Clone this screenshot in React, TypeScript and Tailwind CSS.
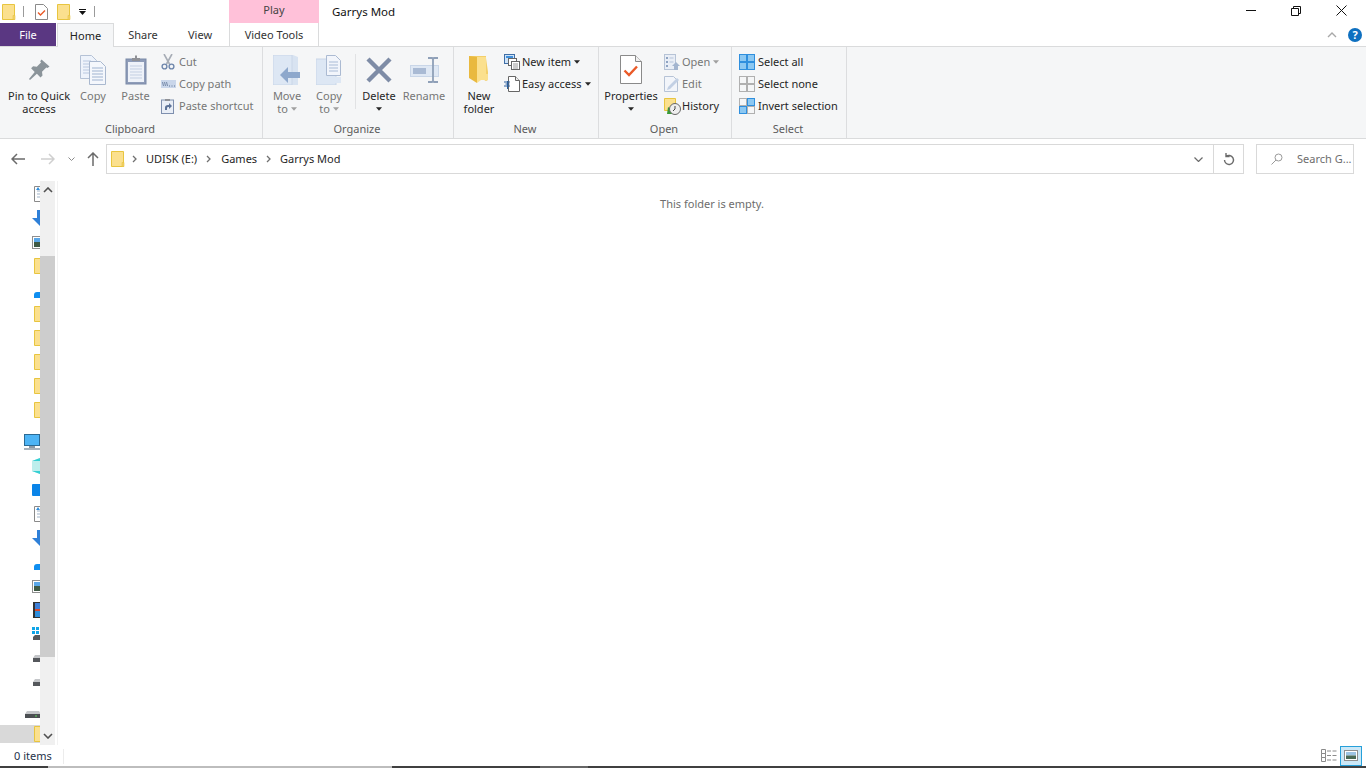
import React from 'react';

const TXT = 'text-[#262626]';
const DIS = 'text-[#767676]';

const Folder = ({ className = '' }: { className?: string }) => (
  <svg viewBox="0 0 14 16" className={`w-[14px] h-[16px] ${className}`}>
    <path d="M.5.5h12v15H.5z" fill="#fbe08e" stroke="#e8c53f" />
    <path d="M11 15.5v-4h2v4z" fill="#f3d268" stroke="#e8c53f" strokeWidth=".6" />
  </svg>
);

const Caret = ({ color = '#262626' }: { color?: string }) => (
  <svg viewBox="0 0 7 4" className="w-[6px] h-[4px]">
    <path d="M0 0h7L3.5 4z" fill={color} />
  </svg>
);

const PinIcon = () => (
  <svg viewBox="0 0 24 24" className="w-[24px] h-[24px]">
    <path d="M14.5 1.5l8 7-2 1.5-1.2-.6-4.3 4.3.5 3.7-2 2-3.6-3.6L3 22l-1-1 5.7-7.1-3.6-3.6 2-2 3.7.5L14 4.5l-.8-1.2z" fill="#8b949a" />
  </svg>
);

const CopyIcon = () => (
  <svg viewBox="0 0 26 30" className="w-[26px] h-[30px]">
    <path d="M.5.5h11l5 5v18H.5z" fill="#eef3fb" stroke="#b5c2d6" />
    <path d="M3 6h8M3 9h11M3 12h11M3 15h11M3 18h11" stroke="#b9c8e0" />
    <path d="M9.5 6.500h11l5 5v18h-16z" fill="#f4f7fc" stroke="#a9b8cf" />
    <path d="M12 13h11M12 16h11M12 19h11M12 22h11M12 25h11" stroke="#9fb3d0" />
  </svg>
);

const PasteIcon = () => (
  <svg viewBox="0 0 22 30" className="w-[22px] h-[30px]">
    <rect x="1" y="4" width="20" height="25" fill="#8e9cb8" stroke="#7a89a8" />
    <rect x="3" y="7" width="16" height="20" fill="#eef2f9" />
    <path d="M5 11h12M5 14h12M5 17h12M5 20h12M5 23h12" stroke="#c3cfe2" />
    <path d="M7 6V3h3V.5h2V3h3v3z" fill="#8f9196" />
  </svg>
);

const CutIcon = () => (
  <svg viewBox="0 0 14 16" className="w-[14px] h-[16px]">
    <path d="M3 0l5.500 10M11 0L5.500 10" stroke="#a7adb6" strokeWidth="1.6" fill="none" />
    <circle cx="3.500" cy="12.500" r="2.400" fill="none" stroke="#6f87ac" strokeWidth="1.4" />
    <circle cx="10.500" cy="12.500" r="2.400" fill="none" stroke="#6f87ac" strokeWidth="1.4" />
  </svg>
);

const CopyPathIcon = () => (
  <svg viewBox="0 0 15 8" className="w-[15px] h-[8px]">
    <rect width="15" height="8" fill="#c9d6ea" />
    <path d="M1.500 2l1 4M3.500 2l1 4M5.500 2l1 4" stroke="#5f7595" strokeWidth=".8" />
    <path d="M8 6h1M10.500 6h1M13 6h1" stroke="#5f7595" />
  </svg>
);

const PasteShortcutIcon = () => (
  <svg viewBox="0 0 14 16" className="w-[14px] h-[16px]">
    <rect x=".5" y="2" width="12" height="13.500" fill="#e9eef6" stroke="#7e8fae" />
    <path d="M4 3V1h5v2z" fill="#8f9196" />
    <path d="M4 12V9.500C4 8 5 7 7 7h1V5l3 3-3 3V9H7C6 9 6 10 6 12z" fill="#5d7398" />
  </svg>
);

const MoveIcon = () => (
  <svg viewBox="0 0 28 30" className="w-[28px] h-[30px]">
    <path d="M0 0h20l5 2v28H0z" fill="#d8e3f1" />
    <path d="M0 0h19v30H0z" fill="#dde7f4" stroke="#c9d6e8" />
    <path d="M7 20l8-8v5h12v6H15v5z" fill="#8ea8cc" />
  </svg>
);

const CopyToIcon = () => (
  <svg viewBox="0 0 26 30" className="w-[26px] h-[30px]">
    <rect y="4" width="20" height="26" fill="#dde7f4" stroke="#c9d6e8" />
    <path d="M10.500.5h9l5 5v15h-14z" fill="#f2f5fb" stroke="#abbad2" />
    <path d="M13 7h9M13 10h9M13 13h9M13 16h9" stroke="#a9bbd6" />
    <path d="M14 22h11v6H14z" fill="#dde7f4" />
  </svg>
);

const DeleteIcon = () => (
  <svg viewBox="0 0 26 26" className="w-[26px] h-[26px]">
    <path d="M2 2l22 22M24 2L2 24" stroke="#7e8ca6" strokeWidth="4.4" />
  </svg>
);

const RenameIcon = () => (
  <svg viewBox="0 0 29 26" className="w-[29px] h-[26px]">
    <rect x=".5" y="8.500" width="28" height="11" fill="#dfe8f4" stroke="#c9d6e8" />
    <rect x="3" y="11" width="13" height="6" fill="#a9bad4" />
    <path d="M18 1h4l1 1 1-1h4M23 2v22M18 25h4l1-1 1 1h4" stroke="#8fa0b8" strokeWidth="1.8" fill="none" />
  </svg>
);

const NewFolderIcon = () => (
  <svg viewBox="0 0 20 28" className="w-[20px] h-[28px]">
    <path d="M0 0h17v2l2 14v8L17 25 8 20H0z" fill="#f3cf6a" />
    <path d="M8 1h9v17h2v6h-7l-4 3z" fill="#fbe08e" />
    <path d="M0 0l8 1v26L0 22z" fill="#e9b93f" />
  </svg>
);

const NewItemIcon = () => (
  <svg viewBox="0 0 16 16" className="w-[16px] h-[16px]">
    <rect x=".5" y=".5" width="10" height="9" fill="#cfe3f7" stroke="#3f6ea6" />
    <rect x="2" y="2" width="7" height="2" fill="#3f8fdc" />
    <rect x="4.500" y="4.500" width="8" height="7" fill="#fff" stroke="#666" />
    <rect x="7.500" y="7.500" width="8" height="8" fill="#fff" stroke="#666" />
    <path d="M9 10h5M9 12h5M9 14h5" stroke="#999" />
  </svg>
);

const EasyAccessIcon = () => (
  <svg viewBox="0 0 16 16" className="w-[16px] h-[16px]">
    <path d="M4.500.5h7l4 4v11h-11z" fill="#fff" stroke="#666" />
    <path d="M11.500.5v4h4" fill="#eee" stroke="#666" />
    <path d="M0 6h6M1.500 8h4M0 10h6" stroke="#2a5f9e" />
    <path d="M3.500 5v8" stroke="#2a5f9e" />
  </svg>
);

const PropertiesIcon = () => (
  <svg viewBox="0 0 22 29" className="w-[22px] h-[29px]">
    <path d="M.5.5h15l6 6v22H.5z" fill="#fff" stroke="#8a8a8a" />
    <path d="M15.500.5v6h6" fill="#f0f0f0" stroke="#8a8a8a" />
    <path d="M4.500 15.500l4.500 4.500L17 11.500" fill="none" stroke="#ea5a28" strokeWidth="2.4" />
  </svg>
);

const OpenIcon = () => (
  <svg viewBox="0 0 16 16" className="w-[16px] h-[16px]">
    <rect x=".5" y=".5" width="11" height="15" fill="#e9eef6" stroke="#b6c3d6" />
    <path d="M2 3h2v2H2zM2 7h2v2H2zM2 11h2v2H2z" fill="#8ea3c2" />
    <path d="M5.500 4h4M5.500 8h4" stroke="#b5c3d9" />
    <path d="M8 12l4-4 4 4h-2v4h-4v-4z" fill="#a3b5cf" />
  </svg>
);

const EditIcon = () => (
  <svg viewBox="0 0 16 16" className="w-[16px] h-[16px]">
    <path d="M.5.5h9l4 4v11H.5z" fill="#f2f5fa" stroke="#b6c3d6" />
    <path d="M3 14l1-3 9-9 2 2-9 9z" fill="#c2d0e4" />
  </svg>
);

const HistoryIcon = () => (
  <svg viewBox="0 0 18 17" className="w-[18px] h-[17px]">
    <path d="M.5.5h11v12H.5z" fill="#fbe08e" stroke="#e8c53f" />
    <path d="M3 16l1-7 3 2 3-2v7z" fill="#3a9a35" />
    <circle cx="11" cy="11" r="5.500" fill="#eee" stroke="#666" />
    <path d="M11 8v3l-2 2" stroke="#444" fill="none" />
  </svg>
);

const SelectGrid = ({ cells }: { cells: boolean[] }) => (
  <svg viewBox="0 0 16 16" className="w-[16px] h-[16px]">
    {cells.map((on, i) => {
      const x = i % 2 === 0 ? 0.5 : 8.5;
      const y = i < 2 ? 0.5 : 8.5;
      return (
        <rect key={i} x={x} y={y} width="7" height="7" fill={on ? '#8cc8f2' : 'none'} stroke={on ? '#2f8fde' : '#b0b0b0'} />
      );
    })}
  </svg>
);

const SmallRow = ({ icon, label, disabled, caret, iconW }: { icon: React.ReactNode; label: string; disabled?: boolean; caret?: string; iconW: string }) => (
  <div className="h-[22px] flex items-center">
    <div className={`${iconW} flex pl-[1px] shrink-0`}>{icon}</div>
    <span className={`whitespace-nowrap ${disabled ? DIS : TXT}`}>{label}</span>
    {caret && (
      <span className="ml-[3px] mb-[1px] flex">
        <Caret color={caret} />
      </span>
    )}
  </div>
);

const LargeBtn = ({ w, icon, lines, disabled, caret, ml }: { w: string; icon: React.ReactNode; lines: string[]; disabled?: boolean; caret?: string; ml?: string }) => (
  <div className={`${w} ${ml ?? ''} flex flex-col items-center shrink-0`}>
    <div className="h-[33px] mt-[1px] flex items-center justify-center">{icon}</div>
    <div className={`mt-[3px] leading-[13px] text-center whitespace-nowrap ${disabled ? DIS : TXT}`}>
      {lines.map((l) => (
        <div key={l} className="flex items-center justify-center gap-[3px]">
          {l}
          {caret && l === lines[lines.length - 1] && lines.length > 1 && <Caret color={caret} />}
        </div>
      ))}
      {caret && lines.length === 1 && (
        <div className="flex justify-center h-[13px] pt-[5px]">
          <Caret color={caret} />
        </div>
      )}
    </div>
  </div>
);

const Group = ({ w, label, children }: { w: string; label: string; children: React.ReactNode }) => (
  <div className={`${w} h-full flex flex-col border-r border-[#dcdddf] shrink-0`}>
    <div className="flex h-[75px] pt-[5px]">{children}</div>
    <div className="text-center text-[#5c5c5c] leading-[14px] pr-[2px]">{label}</div>
  </div>
);

const Doc = () => (
  <svg viewBox="0 0 16 16" className="w-[16px] h-[16px]">
    <path d="M2.500.5h11v15h-11z" fill="#fff" stroke="#8a8a8a" />
    <path d="M5 5h6M5 8h6M5 11h6" stroke="#9fb3c8" />
    <path d="M4 4l2-3 2 3z" fill="#2f8fde" />
  </svg>
);
const ArrowDown = () => (
  <svg viewBox="0 0 16 16" className="w-[16px] h-[16px]">
    <path d="M5 0h6v8h5l-8 8-8-8h5z" fill="#2f80d8" />
  </svg>
);
const Pic = () => (
  <svg viewBox="0 0 16 16" className="w-[16px] h-[16px]">
    <rect x=".5" y="2.500" width="15" height="12" fill="#fff" stroke="#8f8f8f" />
    <rect x="2" y="4" width="12" height="4" fill="#5aa7e8" />
    <rect x="2" y="8" width="12" height="5" fill="#3f5a45" />
  </svg>
);
const Cloud = () => (
  <svg viewBox="0 0 16 16" className="w-[16px] h-[16px]">
    <path d="M2 17v-4a3 3 0 013-3h11v7z" fill="#0f8ef0" />
  </svg>
);
const Monitor = () => (
  <svg viewBox="0 0 16 16" className="w-[16px] h-[16px]">
    <rect x=".5" y=".5" width="15" height="11" fill="#4db4f5" stroke="#2b6a94" />
    <rect x="5" y="12" width="6" height="2" fill="#8c9aa6" />
    <rect y="14" width="16" height="2" fill="#a8b2bb" />
  </svg>
);
const Cube = () => (
  <svg viewBox="0 0 16 16" className="w-[16px] h-[16px]">
    <path d="M0 3l8-3v16l-8-3z" fill="#bdeeec" />
    <path d="M0 3l8-3v3zM0 13l8 3v-3z" fill="#35cfd3" />
  </svg>
);
const Desktop = () => (
  <svg viewBox="0 0 16 16" className="w-[16px] h-[16px]">
    <rect y="2" width="16" height="12" rx="1" fill="#0a84e8" />
  </svg>
);
const Film = () => (
  <svg viewBox="0 0 16 16" className="w-[16px] h-[16px]">
    <rect x="1" width="14" height="16" fill="#333" />
    <rect x="3" y="1" width="10" height="6" fill="#3f7fd6" />
    <rect x="3" y="7" width="10" height="2" fill="#d9482b" />
    <rect x="3" y="9" width="10" height="6" fill="#2f8fde" />
  </svg>
);
const WinDrive = () => (
  <svg viewBox="0 0 16 16" className="w-[16px] h-[16px]">
    <path d="M0 1h3v3H0zM4 1h3v3H4zM0 5h3v3H0zM4 5h3v3H4z" fill="#10a5e8" />
    <path d="M1 11l2-2h10v5H1z" fill="#55585c" />
  </svg>
);
const Drive = () => (
  <svg viewBox="0 0 16 16" className="w-[16px] h-[16px]">
    <path d="M1 8l2-3h13v3z" fill="#c4c6c9" />
    <rect x="1" y="8" width="15" height="4" fill="#55585c" />
  </svg>
);
const BigDrive = () => (
  <svg viewBox="0 0 16 16" className="w-[16px] h-[16px]">
    <path d="M0 8l2-3h12l2 3z" fill="#c4c6c9" />
    <rect y="8" width="16" height="4" fill="#4c4f53" />
    <rect x="10" y="9.500" width="2" height="1" fill="#5ddc5d" />
  </svg>
);
const NavFolder = () => <Folder />;

const sideRows: { icon: React.ReactNode; pad: string; top?: string }[] = [
  { icon: <Doc />, pad: 'pl-[32px]' },
  { icon: <ArrowDown />, pad: 'pl-[32px]' },
  { icon: <Pic />, pad: 'pl-[32px]' },
  { icon: <NavFolder />, pad: 'pl-[34px]' },
  { icon: <Cloud />, pad: 'pl-[32px]' },
  { icon: <NavFolder />, pad: 'pl-[34px]' },
  { icon: <NavFolder />, pad: 'pl-[34px]' },
  { icon: <NavFolder />, pad: 'pl-[34px]' },
  { icon: <NavFolder />, pad: 'pl-[34px]' },
  { icon: <NavFolder />, pad: 'pl-[34px]' },
  { icon: <Monitor />, pad: 'pl-[24px]', top: 'mt-[8px]' },
  { icon: <Cube />, pad: 'pl-[32px]' },
  { icon: <Desktop />, pad: 'pl-[32px]' },
  { icon: <Doc />, pad: 'pl-[32px]' },
  { icon: <ArrowDown />, pad: 'pl-[32px]' },
  { icon: <Cloud />, pad: 'pl-[32px]' },
  { icon: <Pic />, pad: 'pl-[32px]' },
  { icon: <Film />, pad: 'pl-[32px]' },
  { icon: <WinDrive />, pad: 'pl-[32px]' },
  { icon: <Drive />, pad: 'pl-[32px]' },
  { icon: <Drive />, pad: 'pl-[32px]' },
  { icon: <BigDrive />, pad: 'pl-[25px]', top: 'mt-[8px]' },
];

const Sidebar = () => (
  <div className="w-[58px] shrink-0 flex border-r border-[#f2f2f2]">
    <div className="w-[40px] overflow-hidden pt-[1px]">
      {sideRows.map((r, i) => (
        <div key={i} className={`h-[24px] flex items-center ${r.pad} ${r.top ?? ''}`}>
          <div className="shrink-0">{r.icon}</div>
        </div>
      ))}
      <div className="h-[18px] -mt-[1px] bg-[#d9d9d9] flex items-center pl-[34px]">
        <div className="shrink-0">
          <NavFolder />
        </div>
      </div>
    </div>
    <div className="w-[15px] flex flex-col bg-[#f0f0f0]">
      <div className="h-[75px] pt-[6px] flex justify-center">
        <svg viewBox="0 0 10 6" className="w-[10px] h-[6px]">
          <path d="M1 5l4-4 4 4" fill="none" stroke="#505050" strokeWidth="1.6" />
        </svg>
      </div>
      <div className="h-[401px] bg-[#cdcdcd]" />
      <div className="flex-1 flex items-end justify-center pb-[6px]">
        <svg viewBox="0 0 10 6" className="w-[10px] h-[6px]">
          <path d="M1 1l4 4 4-4" fill="none" stroke="#505050" strokeWidth="1.6" />
        </svg>
      </div>
    </div>
  </div>
);

const Crumb = () => (
  <svg viewBox="0 0 5 8" className="w-[5px] h-[8px] shrink-0">
    <path d="M1 1l3 3-3 3" fill="none" stroke="#707070" strokeWidth="1.3" />
  </svg>
);

export default function App() {
  return (
    <div className="w-[1366px] h-[768px] overflow-hidden bg-white flex flex-col font-['Noto_Sans','Open_Sans',sans-serif] text-[11px]">
      {/* title bar */}
      <div className="h-[23px] flex shrink-0">
        <div className="w-[229px] flex items-center pl-[2px]">
          <Folder />
          <div className="ml-[7px] w-px h-[11px] bg-[#9a9a9a]" />
          <svg viewBox="0 0 13 16" className="ml-[11px] w-[13px] h-[16px]">
            <path d="M.5.5h8l4 4v11H.5z" fill="#fff" stroke="#8a8a8a" />
            <path d="M3 8.500l2.500 2.500L10 6.500" fill="none" stroke="#ea5a28" strokeWidth="1.4" />
          </svg>
          <Folder className="ml-[9px]" />
          <svg viewBox="0 0 7 6" className="ml-[8px] w-[7px] h-[6px]">
            <path d="M0 0h7v1H0zM0 2h7L3.500 6z" fill="#111" />
          </svg>
          <div className="ml-[8px] w-px h-[11px] bg-[#9a9a9a]" />
        </div>
        <div className="w-[90px] bg-[#ffc1d9] text-center text-[#444] leading-[20px]">Play</div>
        <div className="ml-[13px] text-[11.5px] text-[#111] leading-[24px]">Garrys Mod</div>
        <div className="ml-auto flex mr-[2px]">
          <div className="w-[45px] flex items-center justify-center">
            <div className="w-[10px] h-px bg-[#111] mb-[2px]" />
          </div>
          <div className="w-[46px] flex items-center justify-center">
            <svg viewBox="0 0 10 10" className="w-[10px] h-[10px] mb-[2px]">
              <path d="M.5 2.500h7v7h-7zM2.500 2.500v-2h7v7h-2" fill="none" stroke="#111" />
            </svg>
          </div>
          <div className="w-[45px] flex items-center justify-center">
            <svg viewBox="0 0 11 11" className="w-[11px] h-[11px] mb-[2px]">
              <path d="M.5.5l10 10M10.500.5l-10 10" fill="none" stroke="#111" />
            </svg>
          </div>
        </div>
      </div>

      {/* tabs */}
      <div className="h-[24px] flex shrink-0 border-b border-[#dadbdc] relative">
        <div className="w-[56px] h-[23px] bg-[#5a3782] text-white text-center leading-[23px]">File</div>
        <div className="ml-[1px] w-[57px] h-[24px] bg-[#f5f6f7] border-x border-t border-[#dadbdc] text-center text-[#222] leading-[23px]">Home</div>
        <div className="w-[58px] text-center text-[#333] leading-[23px]">Share</div>
        <div className="w-[56px] text-center text-[#333] leading-[23px]">View</div>
        <div className="ml-[1px] w-[90px] h-[23px] border-x border-[#dadbdc] text-center text-[#333] leading-[23px]">Video Tools</div>
        <div className="ml-auto flex items-center pr-[4px]">
          <svg viewBox="0 0 10 6" className="w-[10px] h-[6px] mr-[11px]">
            <path d="M1 5l4-4 4 4" fill="none" stroke="#a8a8a8" strokeWidth="1.4" />
          </svg>
          <div className="w-[14px] h-[14px] rounded-full bg-[#0e70c0] text-white text-[11px] font-bold leading-[14px] text-center">?</div>
        </div>
      </div>

      {/* ribbon */}
      <div className="h-[92px] shrink-0 bg-[#f5f6f7] border-b border-[#dadbdc] flex">
        <Group w="w-[263px]" label="Clipboard">
          <LargeBtn w="w-[78px]" icon={<PinIcon />} lines={['Pin to Quick', 'access']} />
          <LargeBtn w="w-[30px]" icon={<CopyIcon />} lines={['Copy']} disabled />
          <LargeBtn ml="ml-[10px]" w="w-[35px]" icon={<PasteIcon />} lines={['Paste']} disabled />
          <div className="ml-[7px] -mt-[1px] flex flex-col">
            <SmallRow iconW="w-[19px]" icon={<CutIcon />} label="Cut" disabled />
            <SmallRow iconW="w-[19px]" icon={<CopyPathIcon />} label="Copy path" disabled />
            <SmallRow iconW="w-[19px]" icon={<PasteShortcutIcon />} label="Paste shortcut" disabled />
          </div>
        </Group>
        <Group w="w-[191px]" label="Organize">
          <LargeBtn ml="ml-[4px]" w="w-[40px]" icon={<MoveIcon />} lines={['Move', 'to']} caret="#a0a0a0" disabled />
          <LargeBtn ml="ml-[2px]" w="w-[40px]" icon={<CopyToIcon />} lines={['Copy', 'to']} caret="#a0a0a0" disabled />
          <div className="ml-[6px] w-px h-[55px] mt-[2px] bg-[#e1e2e4]" />
          <LargeBtn ml="ml-[3px]" w="w-[40px]" icon={<DeleteIcon />} lines={['Delete']} caret="#262626" />
          <LargeBtn ml="ml-[4px]" w="w-[42px]" icon={<RenameIcon />} lines={['Rename']} disabled />
        </Group>
        <Group w="w-[145px]" label="New">
          <LargeBtn ml="ml-[4px]" w="w-[42px]" icon={<NewFolderIcon />} lines={['New', 'folder']} />
          <div className="ml-[3px] -mt-[1px] flex flex-col">
            <SmallRow iconW="w-[19px]" icon={<NewItemIcon />} label="New item" caret="#262626" />
            <SmallRow iconW="w-[19px]" icon={<EasyAccessIcon />} label="Easy access" caret="#262626" />
          </div>
        </Group>
        <Group w="w-[133px]" label="Open">
          <LargeBtn ml="ml-[4px]" w="w-[56px]" icon={<PropertiesIcon />} lines={['Properties']} caret="#262626" />
          <div className="ml-[4px] -mt-[1px] flex flex-col">
            <SmallRow iconW="w-[19px]" icon={<OpenIcon />} label="Open" caret="#a0a0a0" disabled />
            <SmallRow iconW="w-[19px]" icon={<EditIcon />} label="Edit" disabled />
            <SmallRow iconW="w-[19px]" icon={<HistoryIcon />} label="History" />
          </div>
        </Group>
        <Group w="w-[115px]" label="Select">
          <div className="ml-[6px] -mt-[1px] flex flex-col">
            <SmallRow iconW="w-[20px]" icon={<SelectGrid cells={[true, true, true, true]} />} label="Select all" />
            <SmallRow iconW="w-[20px]" icon={<SelectGrid cells={[false, false, false, false]} />} label="Select none" />
            <SmallRow iconW="w-[20px]" icon={<SelectGrid cells={[false, true, true, false]} />} label="Invert selection" />
          </div>
        </Group>
      </div>

      {/* address bar */}
      <div className="h-[42px] shrink-0 flex items-center pb-[2px]">
        <div className="w-[106px] flex items-center shrink-0">
          <svg viewBox="0 0 14 12" className="ml-[11px] w-[14px] h-[12px]">
            <path d="M6 1L1 6l5 5M1 6h13" fill="none" stroke="#6b6b6b" strokeWidth="1.5" />
          </svg>
          <svg viewBox="0 0 14 12" className="ml-[16px] w-[14px] h-[12px]">
            <path d="M8 1l5 5-5 5M13 6H0" fill="none" stroke="#cfcfcf" strokeWidth="1.5" />
          </svg>
          <svg viewBox="0 0 7 4" className="ml-[13px] w-[7px] h-[4px]">
            <path d="M.5.5l3 3 3-3" fill="none" stroke="#8a8a8a" />
          </svg>
          <svg viewBox="0 0 12 14" className="ml-[12px] w-[12px] h-[14px]">
            <path d="M1 6l5-5 5 5M6 1v13" fill="none" stroke="#6b6b6b" strokeWidth="1.5" />
          </svg>
        </div>
        <div className="w-[1138px] h-[30px] border border-[#d9d9d9] flex items-center shrink-0">
          <Folder className="ml-[4px]" />
          <div className="ml-[7px] mr-[9px] flex"><Crumb /></div>
          <span className="text-[#262626]">UDISK (E:)</span>
          <div className="ml-[9px] mr-[10px] flex"><Crumb /></div>
          <span className="text-[#262626]">Games</span>
          <div className="ml-[9px] mr-[9px] flex"><Crumb /></div>
          <span className="text-[#262626]">Garrys Mod</span>
          <div className="ml-auto w-[30px] h-full flex items-center justify-center border-r border-[#d9d9d9]">
            <svg viewBox="0 0 9 5" className="w-[9px] h-[5px]">
              <path d="M.5.5l4 4 4-4" fill="none" stroke="#6b6b6b" strokeWidth="1.2" />
            </svg>
          </div>
          <div className="w-[29px] h-full flex items-center justify-center">
            <svg viewBox="0 0 12 14" className="w-[12px] h-[14px]">
              <path d="M3 4.600A4.500 4.500 0 1 1 1.500 8M3 1v3.600h3.600" fill="none" stroke="#6b6b6b" strokeWidth="1.4" />
            </svg>
          </div>
        </div>
        <div className="ml-[12px] w-[98px] h-[30px] border border-[#d9d9d9] flex items-center shrink-0">
          <svg viewBox="0 0 12 12" className="ml-[14px] w-[12px] h-[12px]">
            <circle cx="7.500" cy="4.500" r="3.500" fill="none" stroke="#9a9a9a" />
            <path d="M5 7l-4.500 4.500" stroke="#9a9a9a" />
          </svg>
          <span className="ml-[14px] text-[#6d6d6d] whitespace-nowrap">Search G...</span>
        </div>
      </div>

      {/* body */}
      <div className="flex-1 flex min-h-0">
        <Sidebar />
        <div className="flex-1 pt-[15px] text-center text-[#6d6d6d] leading-[16px]">This folder is empty.</div>
      </div>

      {/* status bar */}
      <div className="h-[21px] shrink-0 flex items-center pt-[1px]">
        <span className="ml-[14px] text-[#26324a]">0 items</span>
        <div className="ml-[11px] w-px h-[15px] bg-[#ececec]" />
        <div className="ml-auto flex items-center mr-[4px] h-full -mt-[1px]">
          <svg viewBox="0 0 16 14" className="w-[16px] h-[14px] mr-[3px]">
            <path d="M.5.5h4v4h-4zM.5 4.500h4v4h-4zM.5 8.500h4v4h-4z" fill="none" stroke="#8a8a8a" />
            <path d="M6 2h4M11.500 2h4M6 6.500h4M11.500 6.500h4M6 11h4M11.500 11h4" stroke="#8a8a8a" />
          </svg>
          <div className="w-[22px] h-full bg-[#cce8f7] border border-[#26a0da] flex items-center justify-center">
            <svg viewBox="0 0 14 11" className="w-[14px] h-[11px]">
              <rect x=".5" y=".5" width="13" height="10" fill="#fff" stroke="#8f8f8f" />
              <rect x="2" y="2" width="10" height="3.500" fill="#9cc4e4" />
              <rect x="2" y="5.500" width="10" height="3.500" fill="#4a6a55" />
            </svg>
          </div>
        </div>
      </div>

      {/* bottom edge */}
      <div className="h-[2px] shrink-0 flex bg-[#404040]">
        <div className="w-[48px]" />
        <div className="w-[344px] bg-[#bdbdbd]" />
        <div className="w-[148px]" />
        <div className="w-[48px] bg-[#666666]" />
      </div>
    </div>
  );
}
